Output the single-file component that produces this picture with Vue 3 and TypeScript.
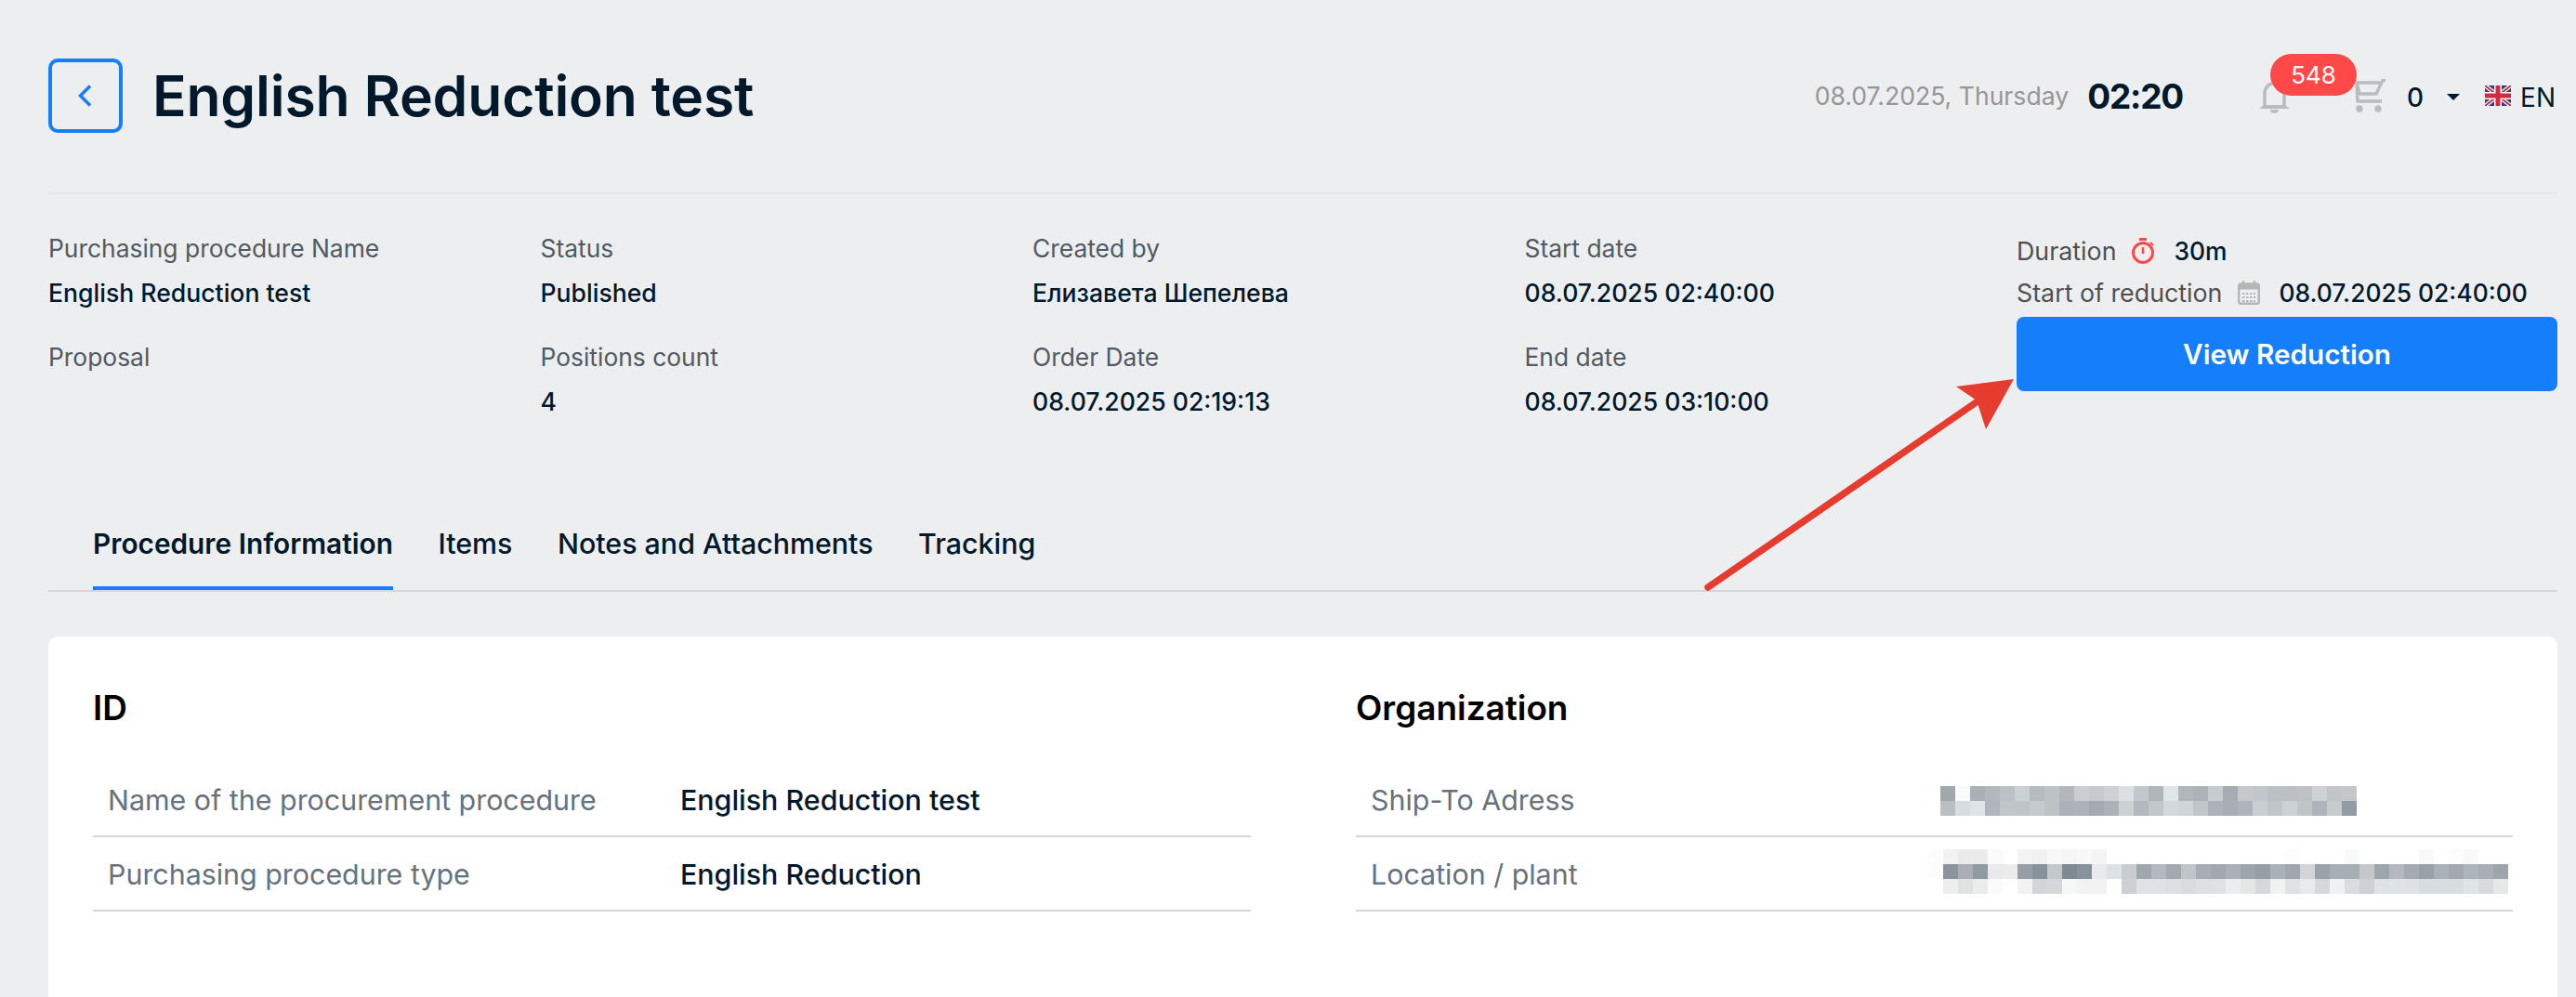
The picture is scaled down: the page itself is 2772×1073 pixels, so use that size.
<script setup lang="ts">
const infoItems = [
  { label: "Purchasing procedure Name", value: "English Reduction test" },
  { label: "Status", value: "Published" },
  { label: "Created by", value: "Елизавета Шепелева" },
  { label: "Start date", value: "08.07.2025 02:40:00" },
  { label: "Proposal", value: "" },
  { label: "Positions count", value: "4" },
  { label: "Order Date", value: "08.07.2025 02:19:13" },
  { label: "End date", value: "08.07.2025 03:10:00" },
];

const tabs = ["Procedure Information", "Items", "Notes and Attachments", "Tracking"];

const idRows = [
  { label: "Name of the procurement procedure", value: "English Reduction test" },
  { label: "Purchasing procedure type", value: "English Reduction" },
];

// pixelated (redacted) values, row by row
const addressCells = (
  "a0a8ae fafafa a9b0b6 b3b8bf bcc1c4 ccd0d2 b6bac1 bec2c5 b3b7bc cbced1 c6cacd cfd2d4 dde0e2 c4c8cc b0b5b9 e2e5e6 b1b5bc adb2b7 c9ccce a6adb2 c5c9cc c2c6c9 bbc0c5 bcc0c5 bec2c5 cfd1d5 c2c6c9 c4c8cb " +
  "b9bfc3 d8dcde e0e4e5 b0b6bc c1c6c9 bfc4c7 c6cacd bdc2c5 adb2b9 adb3b9 a3aab2 acb2b8 ced1d3 b4b9c0 c3c7ca d5d8da d2d5d7 c0c5c8 adb3b8 a8aeb5 aeb4ba cacdd1 c1c5c9 cdd0d4 bfc4c7 aeb4ba c6cbcc 929ca4"
).split(" ");

const plantCells = (
  "fdfdfd f2f2f3 ebebec ebebec fbfbfb ffffff f3f3f4 f1f1f2 f8f8f8 f6f6f7 f8f8f8 f4f4f5 ffffff ffffff ffffff ffffff ffffff ffffff ffffff ffffff ffffff ffffff ffffff ffffff fdfdfd ffffff ffffff ffffff f8f9f9 ffffff ffffff ffffff ffffff f8f9f9 ffffff fdfdfd f9f9fa ffffff ffffff " +
  "fcfcfc 8b949c a9afb5 8f9aa1 e9eaeb ebebec 979fa6 87929a c3c8cb 7f8a93 87929a e9eaeb dfe2e4 c9cdd0 a0a8ae b4b8c0 a2aab0 c1c5c8 a6adb3 a1a9af aab1b6 9ea6ac 959ea5 abb2b7 9fa8ae d2d5d7 9aa3a9 a8afb4 a8afb4 c5c8cb 9da6ad b4b9c0 a4abb1 98a1a8 abb2b7 a2aab0 aeb4bb a7aeb4 9ea6ac " +
  "ffffff edeeef dfe2e3 eaebec fbfbfb ffffff f1f2f2 d3d6d8 d5d8da f6f7f7 f1f2f2 f1f2f2 ffffff ccd0d3 dfe2e4 dfe2e4 dce0e2 d9dcdf dee1e3 dfe2e4 ecedee e3e6e7 d6d9dc f0f1f1 dfe2e4 e9eaeb d6d9dc f0f1f1 d9dde0 cdd1d5 dfe2e4 e0e3e5 dfe2e4 dadde0 d9dde0 dadde0 e1e4e5 d8dbde e6e7e8"
).split(" ");
</script>

<template>
  <div class="page">
    <header class="top">
      <button class="back" type="button">
        <svg width="16" height="26" viewBox="0 0 16 26" fill="none">
          <path d="M13 2.500 2.500 13 13 23.500" stroke="#157efb" stroke-width="3.500" />
        </svg>
      </button>
      <h1 class="title">English Reduction test</h1>
      <div class="top-right">
        <span class="date">08.07.2025, Thursday</span>
        <span class="time">02:20</span>
        <span class="bell">
          <svg width="33" height="35" viewBox="0 0 33 35" fill="none">
            <path d="M6 27V13a10.500 10.500 0 0 1 21 0v14" stroke="#b8bcc1" stroke-width="3.500" />
            <path d="M0 30 5 26h23l5 4z" fill="#b8bcc1" />
            <path d="M12 31h9a4.500 4 0 0 1-9 0z" fill="#b8bcc1" />
          </svg>
          <span class="badge">548</span>
        </span>
        <svg class="cart" width="33" height="36" viewBox="0 0 33 36" fill="none">
          <path d="M33 1.500h-3L23 16H5L2 4h28M2 4l1 20h26" stroke="#b8bcc1" stroke-width="3.400" />
          <circle cx="5" cy="32" r="3.700" fill="#b8bcc1" />
          <circle cx="25" cy="32" r="3.700" fill="#b8bcc1" />
        </svg>
        <span class="count">0</span>
        <span class="caret"></span>
        <svg class="flag" width="28" height="22" viewBox="0 0 56 44">
          <rect width="56" height="44" fill="#2b3f7e" />
          <path d="M0 0l56 44M56 0L0 44" stroke="#fff" stroke-width="9" />
          <path d="M0 0l56 44M56 0L0 44" stroke="#cf2b3f" stroke-width="4" />
          <path d="M28 0v44M0 22h56" stroke="#fff" stroke-width="16" />
          <path d="M28 0v44M0 22h56" stroke="#cf2b3f" stroke-width="10" />
        </svg>
        <span class="lang">EN</span>
      </div>
    </header>

    <section class="info">
      <div class="info-grid">
        <div v-for="item in infoItems" :key="item.label" class="info-item">
          <div class="info-label">{{ item.label }}</div>
          <div class="info-value">{{ item.value }}</div>
        </div>
      </div>
      <div class="reduction">
        <div class="reduction-row">
          <span class="reduction-label">Duration</span>
          <svg width="25" height="28" viewBox="0 0 25 28" fill="none">
            <circle cx="12" cy="16" r="10.500" stroke="#ff4848" stroke-width="3" />
            <path d="M12 10v7" stroke="#ff4848" stroke-width="2.500" />
            <path d="M8 1.500h8" stroke="#ff4848" stroke-width="3" />
            <path d="M20 5l3 3" stroke="#ff4848" stroke-width="2" />
          </svg>
          <span class="reduction-value">30m</span>
        </div>
        <div class="reduction-row">
          <span class="reduction-label">Start of reduction</span>
          <svg width="24" height="26" viewBox="0 0 24 26" fill="none">
            <rect x="1.200" y="3.500" width="21.600" height="21.300" rx="2" stroke="#b6b6b6" stroke-width="2.400" />
            <path d="M1 6.500h22" stroke="#b6b6b6" stroke-width="6" />
            <path d="M6 0v4M18 0v4" stroke="#b6b6b6" stroke-width="2.500" />
            <path d="M5 14h14M5 18h14M5 22h14" stroke="#b6b6b6" stroke-width="2" stroke-dasharray="2.500 1.500" />
          </svg>
          <span class="reduction-value">08.07.2025 02:40:00</span>
        </div>
        <button class="view-btn" type="button">View Reduction</button>
      </div>
    </section>

    <nav class="tabs">
      <div v-for="(tab, i) in tabs" :key="tab" class="tab" :class="{ active: i === 0 }">{{ tab }}</div>
    </nav>

    <main class="card">
      <section>
        <h2 class="card-title">ID</h2>
        <div v-for="row in idRows" :key="row.label" class="row">
          <span class="row-label">{{ row.label }}</span>
          <span class="row-value">{{ row.value }}</span>
        </div>
      </section>
      <section>
        <h2 class="card-title">Organization</h2>
        <div class="row org">
          <span class="row-label">Ship-To Adress</span>
          <div class="mosaic address">
            <i v-for="(c, i) in addressCells" :key="i" :style="{ background: '#' + c }"></i>
          </div>
        </div>
        <div class="row org">
          <span class="row-label">Location / plant</span>
          <div class="mosaic plant">
            <i v-for="(c, i) in plantCells" :key="i" :style="{ background: '#' + c }"></i>
          </div>
        </div>
      </section>
    </main>

    <svg class="arrow" width="2772" height="1073" viewBox="0 0 2772 1073" fill="none">
      <path d="M1838 632 2128 432" stroke="#e63c30" stroke-width="7.500" stroke-linecap="round" />
      <path d="M2167 408 2105 416 2127 431 2137 462z" fill="#e63c30" />
    </svg>
  </div>
</template>

<style>
html,
body {
  margin: 0;
  background: #edeef0;
  overflow: hidden;
}
</style>

<style scoped>
.page {
  position: relative;
  box-sizing: border-box;
  height: 1073px;
  padding: 0 20px 0 52px;
  overflow: hidden;
  background: #edeef0;
  color: #02182b;
  font-family: Inter, "Liberation Sans", "Noto Sans CJK SC", sans-serif;
}
.top {
  display: flex;
  align-items: center;
  height: 80px;
  padding: 63px 0 64px;
  border-bottom: 2px solid #e7e8ea;
}
.back {
  display: flex;
  align-items: center;
  justify-content: center;
  box-sizing: border-box;
  width: 80px;
  height: 80px;
  padding: 0;
  background: transparent;
  border: 4px solid #157efb;
  border-radius: 10px;
}
.title {
  margin: 0 0 0 32px;
  font-size: 60.6px;
  font-weight: 600;
  line-height: 80px;
  letter-spacing: -0.2px;
}
.top-right {
  display: flex;
  align-items: center;
  margin-left: auto;
  padding-right: 2px;
  font-size: 28px;
}
.date {
  color: #969696;
  font-size: 26.6px;
  margin-right: 20px;
}
.time {
  font-size: 37px;
  font-weight: 700;
  letter-spacing: -1.2px;
  margin-right: 82px;
}
.bell {
  position: relative;
  display: flex;
  margin-top: 2px;
  margin-right: 70px;
}
.badge {
  position: absolute;
  left: 12px;
  top: -29px;
  width: 93px;
  height: 45px;
  border-radius: 23px;
  background: #ff4848;
  color: #fff;
  font-size: 26px;
  line-height: 45px;
  text-align: center;
}
.count {
  margin-top: 3px;
  margin-left: 23px;
  margin-right: 28px;
  width: 15px;
  font-weight: 500;
}
.caret {
  width: 0;
  height: 0;
  margin-top: 2px;
  margin-right: 27px;
  border-left: 7px solid transparent;
  border-right: 7px solid transparent;
  border-top: 7px solid #02182b;
}
.lang {
  margin-top: 3px;
  margin-left: 10px;
}
.info {
  display: flex;
  margin-top: 38px;
  height: 288px;
}
.info-grid {
  display: grid;
  grid-template-columns: repeat(4, 529.5px);
  grid-auto-rows: 84px;
  row-gap: 33px;
  width: 2118px;
  padding-top: 2px;
}
.info-label {
  height: 36px;
  margin-bottom: 12px;
  color: #505a63;
  font-size: 26.4px;
  line-height: 36px;
}
.info-value {
  height: 36px;
  font-size: 26.6px;
  font-weight: 500;
  line-height: 36px;
}
.reduction {
  flex: 1;
}
.reduction-row {
  display: flex;
  align-items: center;
  height: 45px;
  font-size: 26.4px;
}
.reduction-label {
  color: #505050;
  font-size: 26.8px;
  margin-right: 17px;
}
.reduction-value {
  margin-left: 20px;
  font-weight: 500;
}
.view-btn {
  display: block;
  width: 100%;
  height: 80px;
  margin-top: 4px;
  background: #157efb;
  border: 0;
  border-radius: 8px;
  color: #fff;
  font-family: inherit;
  font-size: 29.7px;
  font-weight: 600;
}
.tabs {
  display: flex;
  gap: 48.5px;
  padding-left: 48px;
  border-bottom: 2px solid #d5d7da;
}
.tab {
  box-sizing: border-box;
  height: 100px;
  font-size: 30.4px;
  font-weight: 500;
  line-height: 100px;
  white-space: nowrap;
}
.tab.active {
  font-size: 29.8px;
  font-weight: 600;
  border-bottom: 4px solid #157efb;
}
.card {
  display: grid;
  grid-template-columns: 1246px 1245px;
  column-gap: 113px;
  height: 500px;
  margin-top: 48px;
  padding: 55px 48px 0;
  background: #fff;
  border-radius: 10px;
}
.card-title {
  margin: 0 0 37px;
  color: #000;
  font-size: 36.9px;
  font-weight: 600;
  line-height: 44px;
}
.row {
  display: flex;
  align-items: center;
  box-sizing: border-box;
  height: 80px;
  padding: 1px 0 0 16px;
  border-bottom: 2px solid #d3d8dc;
  font-size: 30.4px;
}
.row-label {
  width: 616px;
  flex: none;
  color: #66727c;
}
.row-value {
  font-weight: 500;
  color: #02182b;
}
.mosaic {
  position: absolute;
  display: grid;
  grid-auto-rows: 16px;
}
.mosaic i {
  display: block;
}
.mosaic.address {
  left: 2088px;
  top: 846px;
  grid-template-columns: repeat(28, 16px);
}
.mosaic.plant {
  left: 2075px;
  top: 914px;
  grid-template-columns: repeat(39, 16px);
}
.arrow {
  position: absolute;
  left: 0;
  top: 0;
  pointer-events: none;
}
</style>
